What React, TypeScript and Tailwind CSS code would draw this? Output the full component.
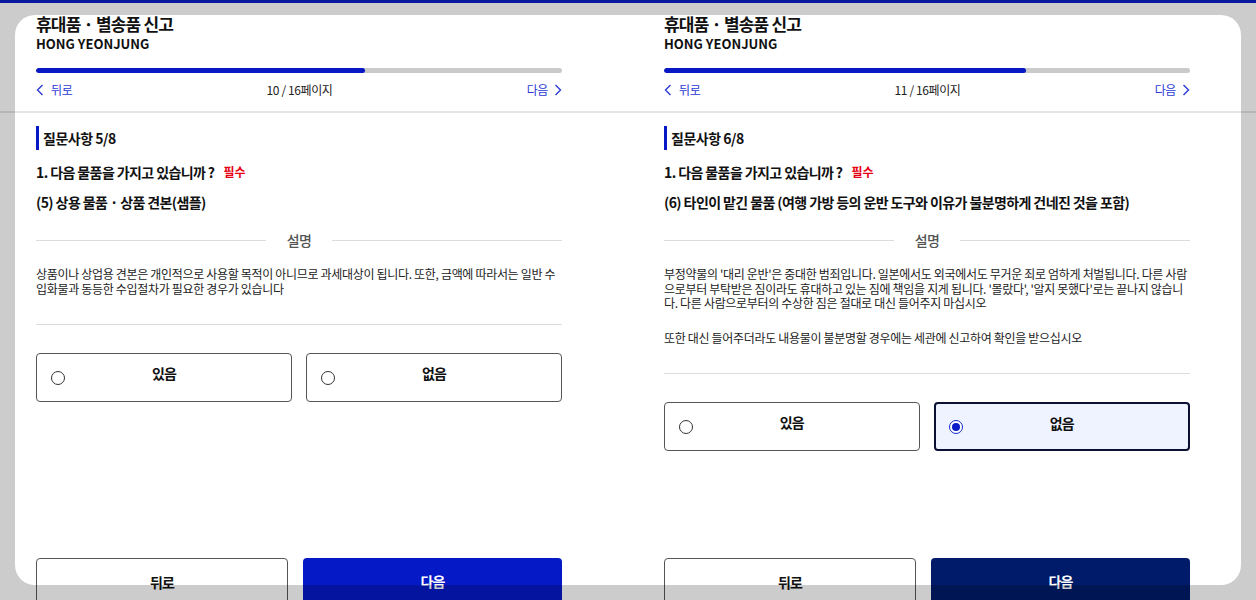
import React from "react";

type PanelProps = {
  page: number;
  question: string;
  item: string;
  paragraphs: string[];
  selected: "yes" | "no" | null;
  nextBg: string;
};

function ChevronL() {
  return (
    <svg width="8" height="12" viewBox="0 0 8 12" fill="none">
      <polyline points="6.5,1 1.5,6 6.5,11" stroke="#2a3bd4" strokeWidth="1.4" />
    </svg>
  );
}
function ChevronR() {
  return (
    <svg width="8" height="12" viewBox="0 0 8 12" fill="none">
      <polyline points="1.5,1 6.5,6 1.5,11" stroke="#2a3bd4" strokeWidth="1.4" />
    </svg>
  );
}

function Radio({ checked }: { checked: boolean }) {
  if (checked) {
    return (
      <span className="flex h-[14px] w-[14px] items-center justify-center rounded-full border border-[#1428c8] bg-white">
        <span className="block h-[8px] w-[8px] rounded-full bg-[#0a1cc8]" />
      </span>
    );
  }
  return <span className="block h-[14px] w-[14px] rounded-full border border-[#333] bg-white" />;
}

function Option({ label, checked }: { label: string; checked: boolean }) {
  return (
    <div
      className={
        "relative flex h-[49px] flex-1 items-center rounded-[4px] " +
        (checked ? "border-2 border-[#0b0f33] bg-[#eef3ff] pl-[13px]" : "border border-[#555] bg-white pl-[14px]")
      }
    >
      <Radio checked={checked} />
      <span className="absolute inset-x-0 top-[7px] text-center text-[14px] font-bold leading-[24px] tracking-[-0.8px] text-[#111]">
        {label}
      </span>
    </div>
  );
}

function Panel({ page, question, item, paragraphs, selected, nextBg }: PanelProps) {
  const pct = (page / 16) * 100;
  return (
    <div className="flex h-[600px] flex-col">
      <div className="border-b-2 border-[#e5e5e5] pb-[11px] pl-[36px] pr-[66px] pt-[13px]">
        <div className="text-[17px] font-bold leading-[22px] tracking-[-0.8px] text-[#111]">휴대품 · 별송품 신고</div>
        <div className="text-[13px] font-bold leading-[18px] text-[#111]">HONG YEONJUNG</div>
        <div className="mt-[15px] h-[5px] w-full overflow-hidden rounded-full bg-[#cacaca]">
          <div className="h-full rounded-full bg-[#0718c4]" style={{ width: pct + "%" }} />
        </div>
        <div className="mt-[7px] flex h-[20px] items-center justify-between text-[12px] leading-[20px] tracking-[-0.4px]">
          <div className="flex items-center gap-[7px] text-[#2a3bd4]">
            <ChevronL />
            <span>뒤로</span>
          </div>
          <div className="text-[#222]">{page} / 16페이지</div>
          <div className="flex items-center gap-[6px] text-[#2a3bd4]">
            <span>다음</span>
            <ChevronR />
          </div>
        </div>
      </div>

      <div className="pl-[36px] pr-[66px]">
        <div className="mt-[13px] border-l-[3px] border-[#0718c4] pl-[4px] text-[14px] font-bold leading-[24px] tracking-[-0.5px] text-[#111]">
          질문사항 {question}
        </div>
        <div className="mt-[10px] flex items-center text-[14px] font-bold leading-[24px] tracking-[-0.6px] text-[#111]">
          <span>1. 다음 물품을 가지고 있습니까 ?</span>
          <span className="ml-[9px] text-[12px] tracking-normal text-[#e60012]">필수</span>
        </div>
        <div className="mt-[6px] text-[14px] font-bold leading-[24px] tracking-[-0.6px] text-[#111]">{item}</div>
        <div className="mt-[14px] flex items-center gap-[21px]">
          <div className="h-px flex-1 bg-[#dcdcdc]" />
          <span className="text-[14px] font-medium leading-[24px] tracking-[-0.6px] text-[#555]">설명</span>
          <div className="h-px flex-1 bg-[#dcdcdc]" />
        </div>
        <div className="mt-[15px] text-[12px] leading-[14.5px] tracking-[-0.32px] text-[#222]">
          {paragraphs.map((p, i) => (
            <p key={i} className={i > 0 ? "mt-[20px]" : ""}>
              {p}
            </p>
          ))}
        </div>
        <div className="mt-[28px] h-px bg-[#dcdcdc]" />
        <div className="mt-[28px] flex gap-[14px]">
          <Option label="있음" checked={selected === "yes"} />
          <Option label="없음" checked={selected === "no"} />
        </div>
      </div>

      <div className="mb-[-12px] mt-auto flex gap-[15px] pl-[36px] pr-[66px]">
        <div className="flex h-[54px] w-[252px] justify-center rounded-[4px] border border-[#555] bg-white pt-[11px] text-[14px] font-bold leading-[24px] tracking-[-0.8px] text-[#111]">
          뒤로
        </div>
        <div
          className={
            "flex h-[54px] flex-1 justify-center rounded-[4px] pt-[11px] text-[14px] font-bold leading-[24px] tracking-[-0.8px] text-white " +
            nextBg
          }
        >
          다음
        </div>
      </div>
    </div>
  );
}

export default function App() {
  return (
    <div
      className="relative h-[600px] w-[1256px] overflow-hidden bg-white"
      style={{ fontFamily: '"Noto Sans CJK KR", "Noto Sans", sans-serif' }}
    >
      <div className="absolute inset-x-0 top-0 h-[3px] bg-[#0c20c6]" />
      <div className="grid h-full grid-cols-2">
        <Panel
          page={10}
          question="5/8"
          item="(5) 상용 물품 · 상품 견본(샘플)"
          paragraphs={[
            "상품이나 상업용 견본은 개인적으로 사용할 목적이 아니므로 과세대상이 됩니다. 또한, 금액에 따라서는 일반 수입화물과 동등한 수입절차가 필요한 경우가 있습니다",
          ]}
          selected={null}
          nextBg="bg-[#0619c6]"
        />
        <Panel
          page={11}
          question="6/8"
          item="(6) 타인이 맡긴 물품 (여행 가방 등의 운반 도구와 이유가 불분명하게 건네진 것을 포함)"
          paragraphs={[
            "부정약물의 '대리 운반'은 중대한 범죄입니다. 일본에서도 외국에서도 무거운 죄로 엄하게 처벌됩니다. 다른 사람으로부터 부탁받은 짐이라도 휴대하고 있는 짐에 책임을 지게 됩니다. '몰랐다', '알지 못했다'로는 끝나지 않습니다. 다른 사람으로부터의 수상한 짐은 절대로 대신 들어주지 마십시오",
            "또한 대신 들어주더라도 내용물이 불분명할 경우에는 세관에 신고하여 확인을 받으십시오",
          ]}
          selected="no"
          nextBg="bg-[#001b6a]"
        />
      </div>
      <div className="pointer-events-none absolute left-[15px] top-[15px] h-[570px] w-[1226px] rounded-[20px] shadow-[0_0_0_2000px_rgba(0,0,0,0.2)]" />
    </div>
  );
}
